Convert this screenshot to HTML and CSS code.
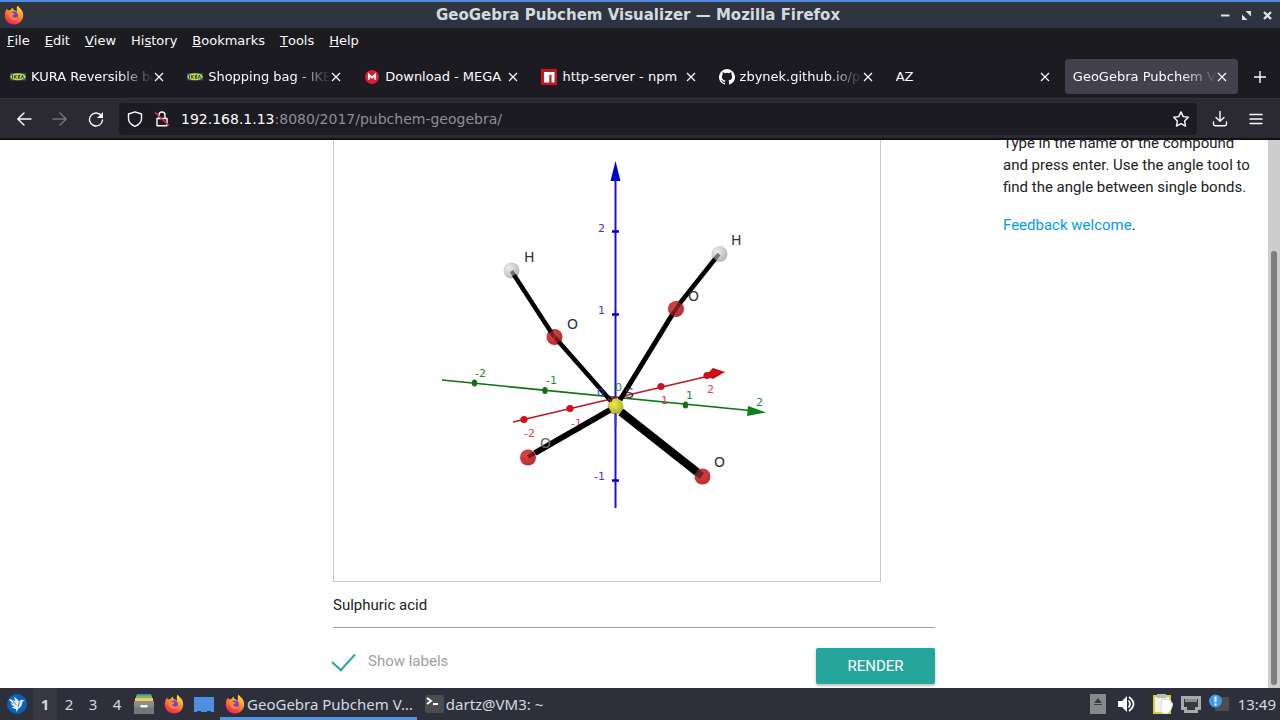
FILE: index.html
```html
<!DOCTYPE html>
<html lang="en">
<head>
<meta charset="utf-8">
<title>GeoGebra Pubchem Visualizer</title>
<link rel="stylesheet" href="styles.css">
</head>
<body>
<svg class="defs" aria-hidden="true">
  <defs>
    <linearGradient id="flame" x1="0.8" y1="0" x2="0.3" y2="1">
      <stop offset="0" stop-color="#fff04a"/><stop offset="0.4" stop-color="#ff9a2e"/><stop offset="0.75" stop-color="#ff4a3d"/><stop offset="1" stop-color="#e8246f"/>
    </linearGradient>
    <symbol id="firefox" viewBox="0 0 20 20">
      <path fill="url(#flame)" d="M10 19.5C4.600 19.500 .8 15.500 .8 10.500c0-2.800 1-5.200 2.400-7 .1 1 .4 1.600.8 2.100.8-.6 1.600-.8 2.500-.7.7-1.200 1.500-2 2.500-2.400-.3 1.200.2 2 1.200 2.800 1.200.4 2.200.8 2.800 1.700-.2-2.400-.5-4.200.5-6.500 1.200 2 3 2.800 4.300 5 .9 1.400 1.400 3 1.400 5 0 5-4 9-9.200 9z"/>
      <circle cx="9.800" cy="10.500" r="4" fill="#7542d8"/>
      <path fill="#ff8b35" d="M4 7.500c1.500-1 3.400-.6 4.600.6 1 .1 1.700.2 2.100.6-.4 1-1.800 1-2.200 1.600-.3 1.300.6 2.500 2.300 2.400 1.200-.1 1.700-.8 2.700-.5-.8 2-2.400 2.700-4.200 2.500C6.200 14.500 4 11.500 4 7.500z"/>
    </symbol>
    <symbol id="ikea" viewBox="0 0 16 16">
      <rect y="4" width="16" height="7.500" fill="#24536f"/>
      <ellipse cx="8" cy="7.800" rx="7.800" ry="3.500" fill="#c4d63a"/>
      <path d="M2.500 6v3.500M4.700 6v3.500m2-3.500L5 7.800l1.800 1.700M10.300 6.300H8.400v3h1.900M8.400 7.800h1.700m1.300 1.700 1-3.300 1.200 3.300" fill="none" stroke="#23434f" stroke-width="1"/>
    </symbol>
    <symbol id="close" viewBox="0 0 10 10"><path d="m1 1 8 8m0-8-8 8" fill="none" stroke="currentColor" stroke-width="1.200"/></symbol>
    <radialGradient id="oxygen" cx=".4" cy=".35" r=".7"><stop offset="0" stop-color="#dc4443"/><stop offset="1" stop-color="#b82c2c"/></radialGradient>
    <radialGradient id="hydrogen" cx=".35" cy=".35" r=".7"><stop offset="0" stop-color="#eeeeee"/><stop offset="1" stop-color="#b5b5b5"/></radialGradient>
    <radialGradient id="sulphur" cx=".4" cy=".35" r=".7"><stop offset="0" stop-color="#eded45"/><stop offset="1" stop-color="#aaa82c"/></radialGradient>
  </defs>
</svg>
<div class="desktop">
  <header class="titlebar">
    <svg class="icon20"><use href="#firefox"/></svg>
    <h1 class="window-title">GeoGebra Pubchem Visualizer — Mozilla Firefox</h1>
    <div class="window-buttons">
      <button class="plain" aria-label="Minimize"><svg width="9" height="9" viewBox="0 0 9 9"><path d="M0 4.500h8.500" stroke="#dfe2ea" stroke-width="2"/></svg></button>
      <button class="plain" aria-label="Restore"><svg width="9" height="9" viewBox="0 0 9 9"><path d="M3.500 0H9v5.500zM0 3.500 5.500 9H0z" fill="#dfe2ea"/></svg></button>
      <button class="plain" aria-label="Close"><svg width="9" height="9" viewBox="0 0 9 9"><path d="m1 1 7 7m0-7L1 8" stroke="#dfe2ea" stroke-width="2.400"/></svg></button>
    </div>
  </header>
  <nav class="menubar">
    <button class="plain"><u>F</u>ile</button><button class="plain"><u>E</u>dit</button><button class="plain"><u>V</u>iew</button><button class="plain">Hi<u>s</u>tory</button><button class="plain"><u>B</u>ookmarks</button><button class="plain"><u>T</u>ools</button><button class="plain"><u>H</u>elp</button>
  </nav>
  <div class="tabs">
    <div class="tab"><svg class="icon16"><use href="#ikea"/></svg><span class="tab-label fade">KURA Reversible bed</span><button class="plain tab-close" aria-label="Close tab"><svg><use href="#close"/></svg></button></div>
    <div class="tab"><svg class="icon16"><use href="#ikea"/></svg><span class="tab-label fade">Shopping bag - IKEA</span><button class="plain tab-close" aria-label="Close tab"><svg><use href="#close"/></svg></button></div>
    <div class="tab"><svg class="icon16" viewBox="0 0 16 16"><circle cx="8" cy="8" r="7" fill="#dd1d2e"/><path d="M4.800 10.800V5.600L8 8.700l3.200-3.100v5.200" fill="none" stroke="#fff" stroke-width="1.800"/></svg><span class="tab-label">Download - MEGA</span><button class="plain tab-close" aria-label="Close tab"><svg><use href="#close"/></svg></button></div>
    <div class="tab"><svg class="icon16" viewBox="0 0 16 16"><path fill="#c4161c" d="M0 0h16v16H0z"/><path fill="#fff" d="M3 3h10.500v10.500h-3V6H8.300v7.500H3z"/></svg><span class="tab-label">http-server - npm</span><button class="plain tab-close" aria-label="Close tab"><svg><use href="#close"/></svg></button></div>
    <div class="tab"><svg class="icon16" viewBox="0 0 16 16"><path fill="#fbfbfe" d="M8 0a8 8 0 0 0-2.530 15.590c.4.070.55-.17.550-.38l-.01-1.490c-2.230.48-2.700-.95-2.700-.95-.36-.92-.89-1.170-.89-1.170-.73-.5.060-.49.060-.49.800.060 1.230.83 1.230.83.710 1.220 1.870.87 2.330.66.070-.52.280-.87.510-1.070-1.780-.2-3.640-.89-3.640-3.950 0-.87.310-1.590.82-2.150-.08-.2-.36-1.020.080-2.120 0 0 .67-.22 2.200.82a7.700 7.700 0 0 1 4 0c1.530-1.040 2.200-.82 2.200-.82.440 1.100.16 1.920.080 2.120.51.560.82 1.270.82 2.150 0 3.070-1.870 3.750-3.650 3.950.29.250.54.730.54 1.480l-.01 2.200c0 .21.150.46.550.38A8 8 0 0 0 8 0z"/></svg><span class="tab-label fade">zbynek.github.io/pub</span><button class="plain tab-close" aria-label="Close tab"><svg><use href="#close"/></svg></button></div>
    <div class="tab"><span class="tab-label">AZ</span><button class="plain tab-close" aria-label="Close tab"><svg><use href="#close"/></svg></button></div>
    <div class="tab active"><span class="tab-label fade">GeoGebra Pubchem Visualizer</span><button class="plain tab-close" aria-label="Close tab"><svg><use href="#close"/></svg></button></div>
    <button class="plain new-tab" aria-label="New tab"><svg width="12" height="12" viewBox="0 0 12 12"><path d="M6 0v12M0 6h12" stroke="#fbfbfe" stroke-width="1.400"/></svg></button>
  </div>
  <div class="toolbar">
    <button class="plain tool" aria-label="Back"><svg class="icon16" viewBox="0 0 16 16"><path d="M15 8H2m6-6L1.800 8 8 14" class="line"/></svg></button>
    <button class="plain tool dim" aria-label="Forward"><svg class="icon16" viewBox="0 0 16 16"><path d="M1 8h13M8 2l6.200 6L8 14" class="line"/></svg></button>
    <button class="plain tool" aria-label="Reload"><svg class="icon16" viewBox="0 0 16 16"><path d="M13.500 5A6.500 6.500 0 1 0 14.500 9" class="line"/><path d="M15 1v6H9z" fill="currentColor"/></svg></button>
    <div class="urlbar">
      <svg class="icon16" viewBox="0 0 16 16"><path d="M8 .8 14.500 3v4.500c0 3.500-2.500 6.200-6.500 7.800-4-1.600-6.500-4.300-6.500-7.800V3z" class="line"/></svg>
      <svg class="icon16" viewBox="0 0 16 16"><path d="M3 7.500h10v7.300H3zM5 7.500V4a3 3 0 0 1 6 0v3.500" class="line"/><path d="m1 1.500 14 13" stroke="#e22850" stroke-width="1.600"/></svg>
      <div class="url" role="textbox" aria-label="Address" tabindex="0">192.168.1.13<span class="url-path">:8080/2017/pubchem-geogebra/</span></div>
      <button class="plain" aria-label="Bookmark this page"><svg class="icon16" viewBox="0 0 16 16"><path d="m8 .9 2.200 4.700 5.100.7-3.700 3.600.9 5.200L8 12.600l-4.500 2.500.9-5.200L.7 6.300l5.100-.7z" class="line"/></svg></button>
    </div>
    <button class="plain tool" aria-label="Downloads"><svg class="icon16" viewBox="0 0 16 16"><path d="M8 .5V10M4 6.500 8 10.300l4-3.800M1.500 11v2c0 1 .7 1.700 1.700 1.700h9.600c1 0 1.700-.7 1.700-1.700v-2" class="line"/></svg></button>
    <button class="plain tool" aria-label="Menu"><svg class="icon16" viewBox="0 0 16 16"><path d="M2 3.500h12M2 8h12M2 12.500h12" class="line"/></svg></button>
  </div>
  <div class="viewport">
    <main class="page">
      <form class="viewer">
        <figure class="plot">
          <svg class="molecule" viewBox="334 140 546 441" role="img" aria-label="Sulphuric acid molecule">
            <g stroke="#1a12d4" stroke-width="2"><path d="M615.500 180v328"/><path stroke="#0000c8" stroke-width="2.500" d="M612 231.500h7M612 314.500h7M612 480.500h7"/></g>
            <path fill="#0000d0" d="M615.500 161l5 20h-10z"/>
            <path d="m442 380 308 30.500" stroke="#0b7416" stroke-width="1.700"/>
            <path d="m748 406 18 6.500-19 3.500z" fill="#0b7f18"/>
            <path d="m513 422 196-46" stroke="#bd1722" stroke-width="1.700"/>
            <path d="m713 368 12 4-12 7-5-2v-4z" fill="#c90e14"/>
            <g fill="#0b7416"><ellipse cx="474.500" cy="383" rx="2.700" ry="3.500"/><ellipse cx="545" cy="390.500" rx="2.700" ry="3.500"/><ellipse cx="685.500" cy="405" rx="2.700" ry="3.500"/></g>
            <g fill="#d1101a"><circle cx="524" cy="419.500" r="3.600"/><circle cx="570" cy="408.500" r="3.600"/><circle cx="661" cy="386.500" r="3.600"/><circle cx="707" cy="375.500" r="3.600"/></g>
            <text x="571" y="427" class="num red">-1</text>
            <g fill="url(#hydrogen)"><circle cx="511.500" cy="270.500" r="8"/><circle cx="719.500" cy="254" r="8"/></g>
            <g fill="url(#oxygen)"><circle cx="554.500" cy="337" r="8"/><circle cx="676" cy="309" r="8"/><circle cx="528" cy="457.500" r="8"/><circle cx="702.500" cy="476.500" r="8"/></g>
            <circle cx="615.500" cy="406.500" r="8" fill="url(#sulphur)"/>
            <g stroke="#000"><path stroke-width="4.500" d="m514 275 37 57M559 342l52 59M715 259l-35 44"/><path stroke-width="5" d="m672 315-52 85"/><path stroke-width="6" d="m610 410-75 43"/><path stroke-width="8" d="m621 412 76 60"/></g>
            <g stroke="#000" opacity=".45"><path stroke-width="4" d="m511.500 271 3 5M551 332l3 5M559 342l-4-5M719 254l-4 5M676 309l4-6M672 315l4-6M535 453l-7 4"/><path stroke-width="7" d="m697 472 5 4"/></g>
            <path d="M615.500 413v13" stroke="#3e38cf" stroke-width="2"/>
            <path d="m608 399 4 2M613 398l3-2" stroke="#6d165c" stroke-width="2"/>
            <text x="615" y="391" class="num green">0</text><text x="597" y="396" class="num blue">0</text>
            <text x="625" y="398" class="atom">S</text>
            <g class="num blue"><text x="598" y="232">2</text><text x="598" y="314">1</text><text x="594" y="480">-1</text></g>
            <g class="num green"><text x="475" y="377">-2</text><text x="546" y="384">-1</text><text x="686" y="399">1</text><text x="756" y="406">2</text></g>
            <g class="num red"><text x="524" y="437">-2</text><text x="661" y="404">1</text><text x="707" y="393">2</text></g>
            <g class="atom"><text x="524" y="262">H</text><text x="731" y="245">H</text><text x="567" y="329">O</text><text x="688" y="301">O</text><text x="540" y="448" class="over-bond">O</text><text x="714" y="467">O</text></g>
          </svg>
        </figure>
        <input class="compound" type="text" value="Sulphuric acid" aria-label="Compound name">
        <div class="actions">
          <label class="check"><input class="check-input" type="checkbox" checked>Show labels</label>
          <button class="render" type="button">RENDER</button>
        </div>
      </form>
      <aside class="help">
        <p class="help-text">Type in the name of the compound and press enter. Use the angle tool to find the angle between single bonds.</p>
        <p class="help-text"><a class="feedback" href="#">Feedback welcome</a>.</p>
      </aside>
    </main>
    <div class="scrollbar"><div class="thumb"></div></div>
  </div>
  <footer class="taskbar">
    <button class="plain launcher" aria-label="Applications"><svg class="icon20" viewBox="0 0 20 20"><circle cx="10" cy="10" r="10" fill="#0a63b8"/><path fill="#e4f1fb" d="M2 5c3 .4 5 1.200 6.500 2.500L7 3c2.500 1.200 4.500 3 5 5 .6-1.500 1.700-2.500 3.200-2.300L18 7l-2.600.6c-.1 3.500-1.400 6-4.200 7.200L9.500 18l-.5-3c-2.200-.3-3.600-1-4.500-2.200 1.200.2 2.200 0 3-.4C5.500 11.600 4 10.500 3.500 9c1.200.5 2.400.7 3.500.5C4.500 8.500 2.500 7 2 5z"/><path d="m5.500 6.500 4 4.500m3-3-1.500 5" stroke="#0a63b8" stroke-width=".8"/></svg></button>
    <div class="workspaces"><button class="plain space current">1</button><button class="plain space">2</button><button class="plain space">3</button><button class="plain space">4</button></div>
    <div class="shortcuts">
      <button class="plain" aria-label="Files"><svg class="icon20" viewBox="0 0 20 20"><path fill="#3a8fc0" d="M3 0h14v4H3z"/><path fill="#7cb45a" d="M2 1.500h16V5H2z"/><path fill="#e9cf58" d="M1 4h18v4H1z"/><path fill="#8b8b8b" d="M0 7h20v13H0z"/><path fill="#777" d="M0 13h20v7H0z"/><path fill="#fff" d="M6.500 11h7v2.500h-7z"/></svg></button>
      <button class="plain" aria-label="Firefox"><svg class="icon20"><use href="#firefox"/></svg></button>
      <button class="plain" aria-label="Show desktop"><svg class="icon20" viewBox="0 0 20 20"><path fill="#4d8fe0" d="M0 3h20v15h-3v-1h-4v1H7v-1H3v1H0z"/></svg></button>
    </div>
    <button class="plain task focused"><svg class="icon20"><use href="#firefox"/></svg><span>GeoGebra Pubchem V…</span></button>
    <button class="plain task"><svg class="icon20" viewBox="0 0 20 20"><rect x="1" y="1" width="19" height="18" rx="2" fill="#4b4c4f"/><path d="m3 4 4 3-4 3M9 10h5" fill="none" stroke="#fff" stroke-width="2"/></svg><span>dartz@VM3: ~</span></button>
    <div class="tray">
      <svg width="16" height="20" viewBox="0 0 16 20"><path fill="#898989" d="M0 0h16v20H0z"/><path fill="#3d3d3d" d="m8 4 4 5H4zM4 10h8v1H4z"/></svg>
      <svg class="volume" width="17" height="16" viewBox="0 0 17 16"><path fill="#fff" d="M0 5h4l5-5v16l-5-5H0z"/><path d="M10.500 4.500q3 3.500 0 7M11 1q9 7 0 14" fill="none" stroke="#fff" stroke-width="1.800"/></svg>
      <svg class="icon20" viewBox="0 0 20 20"><path fill="#d5d03a" d="M0 1h18v19H0z"/><path fill="#f1f1eb" d="M2 3h14v15H2z"/><path fill="#bbb" d="M4 0h9v4H4z"/><path fill="#fff" stroke="#d4d4ce" stroke-width=".7" d="m9 5 8 1 3 4-2 6-4 4-5-1-1-6z"/></svg>
      <svg class="icon20" viewBox="0 0 20 20"><path fill="#aaaaaa" d="M0 2h20v14h-3v3H3v-3H0z"/><path fill="#393939" d="M3 5h14v8h-3v3H6v-3H3z"/><path d="M5 5v3m2-3v3m2-3v3m2-3v3m2-3v3m2-3v3" stroke="#ddd"/></svg>
      <svg class="icon20" viewBox="0 0 20 20"><path fill="#4b4e4c" d="M6 3h14v14H6z"/><circle cx="6.500" cy="7" r="6.500" fill="#3d9ae4"/><path d="M6.500 2.500V8m0 1.500v2" stroke="#fff" stroke-width="2"/></svg>
      <time class="clock">13:49</time>
    </div>
  </footer>
</div>
</body>
</html>
```
FILE: styles.css
```css
* { box-sizing: border-box; }
body { margin: 0; font: 13px/20px "DejaVu Sans", sans-serif; color: #fbfbfe; }
.defs { position: absolute; width: 0; height: 0; }
.desktop { display: flex; flex-direction: column; height: 100vh; overflow: hidden; background: #fff; }
.plain { display: flex; align-items: center; justify-content: center; margin: 0; padding: 0; border: 0; background: none; color: inherit; font: inherit; }
.icon16 { width: 16px; height: 16px; flex: none; }
.icon20 { width: 20px; height: 20px; flex: none; }
.line { fill: none; stroke: currentColor; stroke-width: 1.4; stroke-linejoin: round; stroke-linecap: round; }

.titlebar { display: grid; grid-template-columns: 72px 1fr 72px; align-items: center; height: 28px; flex: none; padding: 0 8px 0 4px; border-top: 2px solid #4d8fdc; background: linear-gradient(#33353d, #2d3342); }
.window-title { margin: 0; text-align: center; white-space: nowrap; font-size: 15px; line-height: 20px; color: #d3dae3; }
.window-buttons { display: flex; justify-content: flex-end; gap: 12px; }

.menubar { display: flex; gap: 15px; height: 26px; flex: none; padding: 0 7px; background: #1c1b20; }
.tabs { display: flex; gap: 4px; height: 44px; flex: none; padding: 5px 0 4px 2px; background: #1c1b22; }
.tab { display: flex; flex: 1; align-items: center; min-width: 0; padding: 0 11px 0 8px; border-radius: 4px; }
.tab .icon16 { margin-right: 5px; }
.tab.active { background: #42414d; }
.tab-label { flex: 1; min-width: 0; overflow: hidden; white-space: nowrap; }
.fade { -webkit-mask-image: linear-gradient(to left, transparent, #000 36px); mask-image: linear-gradient(to left, transparent, #000 36px); }
.tab-close svg { width: 10px; height: 10px; }
.new-tab { width: 38px; padding-right: 2px; }

.toolbar { display: flex; align-items: center; height: 42px; flex: none; padding: 0 6px; border-top: 1px solid #34333b; border-bottom: 2px solid #111015; background: #2b2a33; }
.tool { width: 36px; height: 32px; }
.dim { color: #74737a; }
.urlbar { display: flex; flex: 1; align-items: center; gap: 11px; height: 32px; margin: 0 5px; padding: 0 8px; border-radius: 4px; background: #1c1b22; font-size: 14px; }
.url { flex: 1; }
.url-path { color: #8f8e94; }

.viewport { display: flex; flex: 1; min-height: 0; overflow: hidden; color: #212121; font: 15px/22px Roboto, sans-serif; }
.page { display: grid; flex: 1; grid-template-columns: minmax(0, 602fr) minmax(0, 250fr); column-gap: 68px; align-content: start; padding: 0 15px 0 333px; }
.plot { max-width: 548px; margin: 0; border: 1px solid #c8c8c8; border-top: 0; }
.molecule { display: block; width: 100%; height: auto; }
.num { font: 11px "DejaVu Sans", sans-serif; }
.atom { font: 14px "DejaVu Sans", sans-serif; fill: #333; }
.over-bond { fill: #6a6a6a; }
.blue { fill: #4135cf; }
.green { fill: #2b8440; }
.red { fill: #e63d47; }
.compound { display: block; width: 100%; height: 46px; padding: 0; border: 0; border-bottom: 1px solid #9e9e9e; background: none; color: inherit; font: inherit; }
.actions { display: flex; align-items: flex-start; justify-content: space-between; margin-top: 20px; }
.check { display: flex; align-items: flex-start; gap: 15px; line-height: 26px; color: #9e9e9e; }
.check-input { appearance: none; display: grid; place-items: center; width: 20px; height: 12px; margin: 0; }
.check-input:checked::before { content: ""; width: 11px; height: 20px; border: solid #26a69a; border-width: 0 2px 2px 0; transform: rotate(42deg); }
.render { min-width: 119px; height: 36px; padding: 0; border: 0; border-radius: 2px; background: #26a69a; box-shadow: 0 2px 2px rgba(0, 0, 0, .16), 0 1px 5px rgba(0, 0, 0, .14); color: #fff; font: 15px/34px Roboto, sans-serif; }
.help { margin-top: -8px; }
.help-text { margin: 0 0 16px; }
.feedback { color: #039be5; text-decoration: none; }
.scrollbar { display: flex; width: 12px; padding: 111px 3px 3px; background: #cdcdcd; }
.thumb { flex: 1; border-radius: 3px; background: #7f7f7f; }

.taskbar { display: flex; height: 32px; flex: none; background: #2d303b; color: #d3dae3; font: 15px/20px "Noto Sans", sans-serif; }
.launcher { width: 33px; }
.workspaces { display: flex; }
.space { width: 24px; }
.current { background: #363944; font-weight: bold; }
.shortcuts { display: flex; gap: 10px; padding: 0 6px 0 5px; }
.task { justify-content: flex-start; gap: 2px; margin-right: 2px; padding: 0 4px 0 5px; border-bottom: 3px solid transparent; border-top: 2px solid transparent; white-space: nowrap; }
.focused { border-bottom-color: #5294e2; }
.tray { display: flex; align-items: center; gap: 8px; margin-left: auto; padding-right: 4px; }
.volume { margin: 0 10px 0 4px; }
.clock { margin-left: 1px; }
```
